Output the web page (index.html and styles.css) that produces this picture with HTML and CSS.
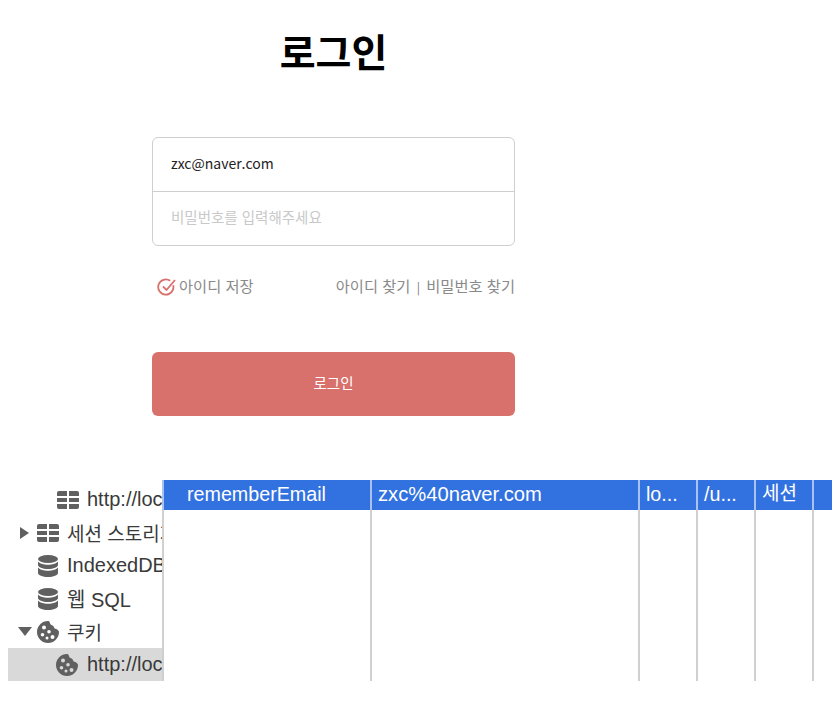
FILE: index.html
```html
<!DOCTYPE html>
<html lang="ko">
<head>
    <meta charset="UTF-8">
    <meta name="viewport" content="width=device-width, initial-scale=1.0">
    <title>로그인</title>
    <link rel="stylesheet" href="styles.css">
</head>
<body>
    <svg class="defs" width="0" height="0">
        <symbol id="i-table" viewBox="0 0 22 18">
            <path d="M0 2a2 2 0 0 1 2-2h8v5H0zM12 0h8a2 2 0 0 1 2 2v3H12zM0 7h10v4H0zM12 7h10v4H12zM0 13h10v5H2a2 2 0 0 1-2-2zM12 13h10v3a2 2 0 0 1-2 2h-8z"/>
        </symbol>
        <symbol id="i-db" viewBox="0 0 22 22">
            <ellipse cx="11" cy="4" rx="10" ry="4"/>
            <path d="M1 6.500c1.500 2 5.500 3.200 10 3.200s8.500-1.200 10-3.200V10c0 2.200-4.500 4-10 4S1 12.200 1 10zM1 12.500c1.500 2 5.500 3.200 10 3.200s8.500-1.200 10-3.200V18c0 2.200-4.500 4-10 4S1 20.200 1 18z"/>
        </symbol>
        <symbol id="i-cookie" viewBox="0 0 22 22">
            <path fill-rule="evenodd" d="M11 0c1 0 1.600.6 1.800 1.600.2 1.500 1.300 2.600 2.700 2.800.7.100 1.100.5 1.200 1.200.2 1.300 1.200 2.300 2.500 2.500.8.100 1.300.5 1.800 1.200.7 1 1 1.200 1 1.700a11 11 0 1 1-11-11zM7 4.500a2 2 0 1 0 0 4 2 2 0 0 0 0-4zM12 9a1.800 1.800 0 1 0 0 3.600A1.800 1.800 0 0 0 12 9zM5.500 12a1.800 1.800 0 1 0 0 3.600 1.800 1.800 0 0 0 0-3.600zM15.500 14a2 2 0 1 0 0 4 2 2 0 0 0 0-4zM10 15.500a1.500 1.500 0 1 0 0 3 1.500 1.500 0 0 0 0-3z"/>
        </symbol>
    </svg>

    <div class="login">
        <h1>로그인</h1>
        <div class="fields">
            <div class="field">zxc@naver.com</div>
            <div class="field placeholder">비밀번호를 입력해주세요</div>
        </div>
        <div class="options">
            <label class="remember">
                <svg class="check" width="20" height="20" viewBox="0 0 20 20" fill="none" stroke="#d9706c" stroke-width="1.800">
                    <path d="M16.200 8.200a7.600 7.600 0 1 1-3-4.400"/>
                    <path d="M6 9.500l3.500 3.500 8.500-10"/>
                </svg>
                아이디 저장
            </label>
            <div class="find">아이디 찾기 <span class="sep">|</span> 비밀번호 찾기</div>
        </div>
        <button class="submit">로그인</button>
    </div>

    <div class="devtools">
        <ul class="tree">
            <li class="lvl2"><svg class="ico"><use href="#i-table"/></svg><span>http://localhost</span></li>
            <li><i class="arrow right"></i><svg class="ico"><use href="#i-table"/></svg><span class="ko">세션 스토리지</span></li>
            <li class="lvl1"><svg class="ico"><use href="#i-db"/></svg><span>IndexedDB</span></li>
            <li class="lvl1"><svg class="ico"><use href="#i-db"/></svg><span>웹 SQL</span></li>
            <li><i class="arrow down"></i><svg class="ico"><use href="#i-cookie"/></svg><span class="ko">쿠키</span></li>
            <li class="lvl2 selected"><svg class="ico"><use href="#i-cookie"/></svg><span>http://localhost</span></li>
        </ul>
        <div class="cookies">
            <div class="row">
                <div class="cell name">rememberEmail</div>
                <div class="cell value">zxc%40naver.com</div>
                <div class="cell small">lo...</div>
                <div class="cell small">/u...</div>
                <div class="cell small ko">세션</div>
                <div class="cell rest"></div>
            </div>
            <div class="row empty">
                <div class="cell name"></div>
                <div class="cell value"></div>
                <div class="cell small"></div>
                <div class="cell small"></div>
                <div class="cell small"></div>
                <div class="cell rest"></div>
            </div>
        </div>
    </div>
</body>
</html>
```

FILE: styles.css
```css
body {
    margin: 0;
    height: 712px;
    background-color: #fff;
    font-family: "Noto Sans CJK KR", "Noto Sans", sans-serif;
    overflow: hidden;
}
.defs {
    position: absolute;
}
.login {
    width: 363px;
    margin-left: 152px;
}
h1 {
    margin: 0;
    padding-top: 23px;
    height: 137px;
    box-sizing: border-box;
    font-size: 39px;
    line-height: 55px;
    font-weight: 700;
    text-align: center;
    color: #000;
}
.fields {
    border: 1px solid #cfcfcf;
    border-radius: 6px;
}
.field {
    height: 53px;
    padding-left: 18px;
    font-size: 14px;
    line-height: 50px;
    color: #222;
}
.field + .field {
    height: 53px;
    border-top: 1px solid #cfcfcf;
}
.placeholder {
    font-size: 14.5px;
    color: #c9c9c9;
}
.options {
    display: flex;
    justify-content: space-between;
    align-items: center;
    height: 24px;
    margin-top: 27px;
    font-size: 15.3px;
    color: #8a8a8a;
}
.remember {
    display: flex;
    align-items: center;
    gap: 2px;
    margin-left: 5px;
}
.check {
    margin-top: 3px;
}
.sep {
    font-size: 12px;
    margin: 0 2px;
    color: #777;
}
.submit {
    display: block;
    width: 100%;
    height: 64px;
    margin-top: 55px;
    padding-bottom: 4px;
    background-color: #d8706c;
    color: #fff;
    border: none;
    border-radius: 6px;
    font-family: inherit;
    font-size: 14.5px;
}
.devtools {
    display: flex;
    height: 201px;
    margin-top: 64px;
}
.tree {
    width: 162px;
    margin: 0;
    padding: 3px 0 0;
    list-style: none;
    font-family: "Liberation Sans", "Noto Sans CJK KR", sans-serif;
    font-size: 20px;
    color: #3a3a3a;
}
.tree li {
    display: flex;
    align-items: center;
    height: 33px;
    padding-left: 20px;
    white-space: nowrap;
    box-sizing: border-box;
}
.tree li span {
    min-width: 0;
    overflow: hidden;
}
.tree li.lvl1 {
    padding-left: 37px;
}
.tree li.lvl2 {
    padding-left: 57px;
}
.tree li.selected {
    margin-left: 8px;
    padding-left: 48px;
    background-color: #d9d9d9;
}
.selected .ico {
    margin-right: 9px;
}
.tree .ko, .row .ko {
    font-size: 19px;
}
.ico {
    flex: none;
    width: 22px;
    height: 22px;
    margin-right: 8px;
    fill: #606060;
}
.arrow {
    flex: none;
    width: 0;
    height: 0;
}
.arrow.right {
    margin-right: 8px;
    border-top: 6px solid transparent;
    border-bottom: 6px solid transparent;
    border-left: 9px solid #5f5f5f;
}
.arrow.down {
    margin-left: -2px;
    margin-right: 5px;
    border-left: 7px solid transparent;
    border-right: 7px solid transparent;
    border-top: 9px solid #5f5f5f;
}
.cookies {
    flex: 1;
    display: flex;
    flex-direction: column;
}
.row {
    display: flex;
    height: 30px;
    background-color: #3271e0;
    color: #fff;
    font-family: "Liberation Sans", "Noto Sans CJK KR", sans-serif;
    font-size: 19.7px;
    line-height: 28px;
}
.row.empty {
    flex: 1;
    background-color: #fff;
}
.cell {
    box-sizing: border-box;
    padding-left: 6px;
    border-left: 2px solid #d0d0d0;
    white-space: nowrap;
    overflow: hidden;
}
.row:first-child .cell {
    border-left-color: #a9c2ee;
}
.name {
    width: 208px;
    padding-left: 23px;
}
.value {
    width: 268px;
    font-size: 20.2px;
}
.small {
    width: 58px;
}
.rest {
    flex: 1;
}
```
